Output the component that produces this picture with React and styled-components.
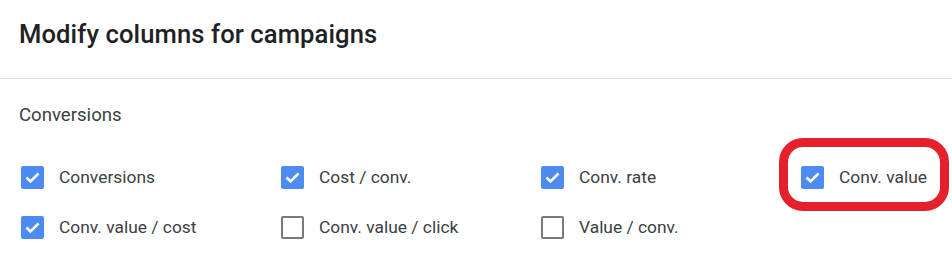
import styled, { createGlobalStyle } from "styled-components";

const GlobalStyle = createGlobalStyle`
  html, body {
    margin: 0;
    padding: 0;
    background: #ffffff;
  }
  body {
    font-family: Roboto, "Liberation Sans", Arial, sans-serif;
    color: #202124;
  }
`;

const Dialog = styled.div`
  width: 952px;
  height: 273px;
  overflow: hidden;
  background: #ffffff;
`;

const Header = styled.div`
  box-sizing: border-box;
  height: 79px;
  padding: 18px 19px 0;
  border-bottom: 1px solid #dadce0;
`;

const Title = styled.h1`
  margin: 0;
  font-size: 25.6px;
  line-height: 32px;
  font-weight: 500;
  color: #202124;
  letter-spacing: 0.1px;
`;

const Section = styled.div`
  padding: 23px 19px 0 21px;
`;

const SectionLabel = styled.div`
  margin-left: -2px;
  font-size: 18.6px;
  line-height: 26px;
  color: #3c4043;
`;

const Grid = styled.div`
  display: grid;
  grid-template-columns: repeat(4, 260px);
  grid-auto-rows: 50px;
  margin-top: 36px;
`;

const Item = styled.label`
  position: relative;
  display: flex;
  align-items: center;
  gap: 15px;
  height: 26px;
  font-size: 17.4px;
  color: #3c4043;
`;

const Box = styled.span`
  box-sizing: border-box;
  flex: none;
  width: 23px;
  height: 23px;
  border-radius: 2px;
  display: flex;
  align-items: center;
  justify-content: center;
  background: ${(p) => (p.checked ? "#4d8bf0" : "#ffffff")};
  border: ${(p) => (p.checked ? "none" : "2px solid #7a7a7a")};
`;

const Highlight = styled.span`
  position: absolute;
  left: -22px;
  top: -26px;
  width: 170px;
  height: 73px;
  box-sizing: border-box;
  border: 9px solid #e3202b;
  border-radius: 24px;
  pointer-events: none;
`;

const columns = [
  { label: "Conversions", checked: true },
  { label: "Cost / conv.", checked: true },
  { label: "Conv. rate", checked: true },
  { label: "Conv. value", checked: true, marked: true },
  { label: "Conv. value / cost", checked: true },
  { label: "Conv. value / click", checked: false },
  { label: "Value / conv.", checked: false },
];

function Checkbox({ checked }) {
  return (
    <Box checked={checked}>
      {checked && (
        <svg width="23" height="23" viewBox="0 0 23 23">
          <polyline
            points="5.5,11.5 9.5,15.5 17.5,7.5"
            fill="none"
            stroke="#ffffff"
            strokeWidth="2.5"
          />
        </svg>
      )}
    </Box>
  );
}

export default function App() {
  return (
    <Dialog>
      <GlobalStyle />
      <Header>
        <Title>Modify columns for campaigns</Title>
      </Header>
      <Section>
        <SectionLabel>Conversions</SectionLabel>
        <Grid>
          {columns.map((c) => (
            <Item key={c.label}>
              <Checkbox checked={c.checked} />
              <span>{c.label}</span>
              {c.marked && <Highlight />}
            </Item>
          ))}
        </Grid>
      </Section>
    </Dialog>
  );
}
